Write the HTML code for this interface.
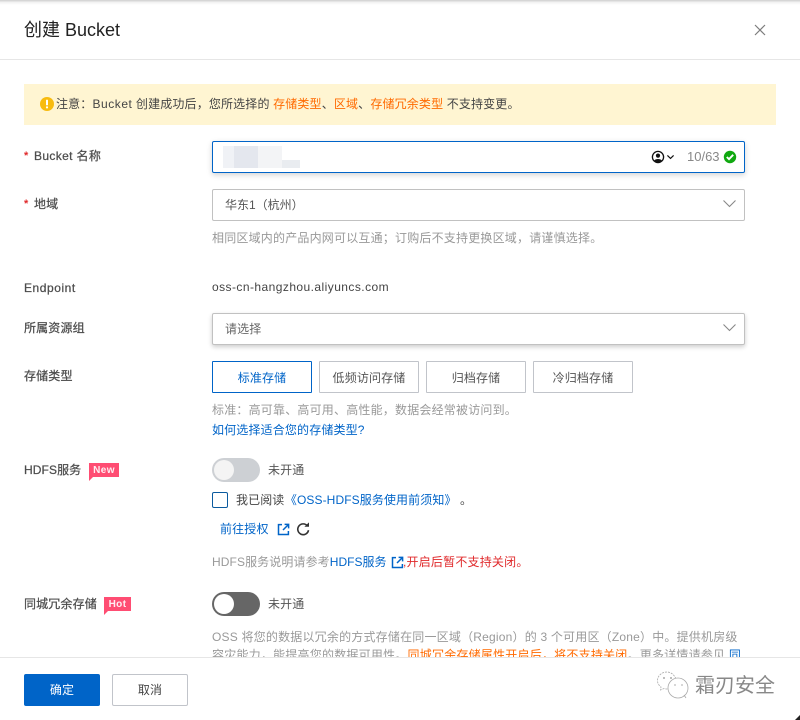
<!DOCTYPE html>
<html lang="zh-CN">
<head>
<meta charset="utf-8">
<title>创建 Bucket</title>
<style>
html,body{margin:0;padding:0;width:800px;height:720px;overflow:hidden;background:#fff}
body{position:relative;font-family:"Liberation Sans","Noto Sans CJK SC",sans-serif;font-size:12px;letter-spacing:.15px;color:#333;-webkit-font-smoothing:antialiased}
.a{position:absolute}
.t{position:absolute;white-space:nowrap;line-height:18px;height:18px}
.l{color:#4d4d4d;-webkit-text-stroke:.25px #4d4d4d}
.g{color:#999;letter-spacing:.2px}
.b{color:#0064c8}
.o{color:#ff6a00}
.r{color:#e0292b}
.s{color:#e0292b;font-weight:700}
.box{position:absolute;box-sizing:border-box;background:#fff;border:1px solid #c1c1c1;border-radius:2px}
.btn{position:absolute;box-sizing:border-box;top:361px;width:100px;height:32px;line-height:31px;text-align:center;border:1px solid #c1c4ca;border-radius:1px;color:#555;background:#fff;padding-top:1px}
.tag{position:absolute;box-sizing:border-box;padding-top:2px;color:#ffeef2;background:#ff4d73;font-size:10px;font-weight:700;letter-spacing:.4px;line-height:12px;height:14px;text-align:center}
</style>
</head>
<body>
<div class="a" style="left:0;top:0;width:800px;height:5px;background:linear-gradient(#cfcfcf,#f4f4f4 50%,#fff)"></div>

<div class="t" style="left:24px;top:18px;font-size:18px;letter-spacing:0;line-height:24px;height:24px;color:#222">创建 Bucket</div>
<svg class="a" style="left:753px;top:23px" width="14" height="14" viewBox="0 0 14 14"><path d="M2 2 L12 12 M12 2 L2 12" stroke="#7d7d7d" stroke-width="1.2" fill="none"/></svg>
<div class="a" style="left:0;top:59px;width:800px;height:1px;background:#e6e6e6"></div>

<div class="a" style="left:24px;top:84px;width:752px;height:41px;background:#fff5d2"></div>
<svg class="a" style="left:40px;top:97px" width="14" height="14" viewBox="0 0 14 14"><circle cx="7" cy="7" r="7" fill="#f8bb0f"/><rect x="6" y="2.6" width="2" height="5.8" rx=".8" fill="#fff"/><circle cx="7" cy="10.4" r="1.1" fill="#fff"/></svg>
<div class="t" style="left:56px;top:95px;letter-spacing:.15px;color:#444">注意：<span style="letter-spacing:.55px">Bucket</span> 创建成功后，您所选择的 <span class="o">存储类型</span>、<span class="o">区域</span>、<span class="o">存储冗余类型</span> 不支持变更。</div>

<div class="t s" style="left:24px;top:147px;font-size:11px">*</div>
<div class="t l" style="left:34px;top:147px;letter-spacing:.35px">Bucket 名称</div>
<div class="box" style="left:212px;top:141px;width:533px;height:32px;border-color:#0064c8;box-shadow:0 2px 6px rgba(0,0,0,.18)"></div>
<div class="a" style="left:223px;top:146px;width:11px;height:22px;background:#f0f2f6"></div>
<div class="a" style="left:234px;top:146px;width:24px;height:22px;background:#e4e7ee"></div>
<div class="a" style="left:258px;top:146px;width:24px;height:22px;background:#f3f4f6"></div>
<div class="a" style="left:282px;top:160px;width:18px;height:8px;background:#e9ecf0"></div>
<svg class="a" style="left:651px;top:150px" width="25" height="14" viewBox="0 0 25 14"><circle cx="7" cy="7" r="5.6" fill="none" stroke="#111" stroke-width="1.3"/><circle cx="7" cy="5.6" r="2.1" fill="#111"/><path d="M3.2 10.6 C4.4 8.4 9.6 8.4 10.8 10.6 C9 12.6 5 12.6 3.2 10.6Z" fill="#111"/><path d="M16.4 5.4 L19.5 8.4 L22.6 5.4" fill="none" stroke="#111" stroke-width="1.2"/></svg>
<div class="t" style="left:687px;top:148px;color:#888;font-size:13px;letter-spacing:0">10/63</div>
<svg class="a" style="left:723px;top:150px" width="14" height="14" viewBox="0 0 14 14"><circle cx="7" cy="7" r="6.2" fill="#10a810"/><path d="M3.8 7 L6 9.2 L10.2 4.8" fill="none" stroke="#fff" stroke-width="1.9"/></svg>

<div class="t s" style="left:24px;top:195px;font-size:11px">*</div>
<div class="t l" style="left:34px;top:195px">地域</div>
<div class="box" style="left:212px;top:189px;width:533px;height:32px"></div>
<div class="t" style="left:225px;top:196px;color:#555;letter-spacing:0">华东1（杭州）</div>
<svg class="a" style="left:722px;top:198px" width="15" height="12" viewBox="0 0 15 12"><path d="M1.5 2.5 L7.5 8.5 L13.5 2.5" fill="none" stroke="#888" stroke-width="1.1"/></svg>
<div class="t g" style="left:212px;top:229px">相同区域内的产品内网可以互通；订购后不支持更换区域，请谨慎选择。</div>

<div class="t l" style="left:24px;top:279px;letter-spacing:.55px">Endpoint</div>
<div class="t" style="left:212px;top:278px;color:#444;letter-spacing:.44px">oss-cn-hangzhou.aliyuncs.com</div>

<div class="t l" style="left:24px;top:319px">所属资源组</div>
<div class="box" style="left:212px;top:313px;width:533px;height:32px;box-shadow:0 2px 5px rgba(0,0,0,.2)"></div>
<div class="t" style="left:225px;top:320px;color:#666">请选择</div>
<svg class="a" style="left:722px;top:322px" width="15" height="12" viewBox="0 0 15 12"><path d="M1.5 2.5 L7.5 8.5 L13.5 2.5" fill="none" stroke="#888" stroke-width="1.1"/></svg>

<div class="t l" style="left:24px;top:367px">存储类型</div>
<div class="btn" style="left:212px;border-color:#0064c8;color:#0064c8">标准存储</div>
<div class="btn" style="left:319px">低频访问存储</div>
<div class="btn" style="left:426px">归档存储</div>
<div class="btn" style="left:533px">冷归档存储</div>
<div class="t g" style="left:212px;top:401px">标准：高可靠、高可用、高性能，数据会经常被访问到。</div>
<div class="t b" style="left:212px;top:421px">如何选择适合您的存储类型?</div>

<div class="t l" style="left:24px;top:461px;letter-spacing:.1px">HDFS服务</div>
<div class="tag" style="left:89px;top:463px;width:30px">New</div>
<div class="a" style="left:89px;top:477px;width:0;height:0;border-top:4px solid #ff4d73;border-right:4px solid transparent"></div>
<div class="a" style="left:212px;top:458px;width:48px;height:24px;border-radius:12px;background:#cdd0d4"></div>
<div class="a" style="left:214px;top:460px;width:20px;height:20px;border-radius:50%;background:#f4f4f4"></div>
<div class="t" style="left:268px;top:461px;color:#555">未开通</div>

<div class="a" style="box-sizing:border-box;left:212px;top:492px;width:16px;height:16px;border:1px solid #0b5a9e;border-radius:2px;background:#fff"></div>
<div class="t" style="left:236px;top:491px;color:#444;letter-spacing:.1px">我已阅读 <span class="b" style="margin-left:-3px">《OSS-HDFS服务使用前须知》</span> 。</div>

<div class="t b" style="left:220px;top:520px">前往授权</div>
<svg class="a" style="left:277px;top:523px" width="13" height="13" viewBox="0 0 13 13"><path d="M5 1.6 H1.5 V11.5 H11.4 V8" fill="none" stroke="#0064c8" stroke-width="1.5"/><path d="M6 7 L11 2 M7.6 1.4 H11.6 V5.4" fill="none" stroke="#0064c8" stroke-width="1.5"/></svg>
<svg class="a" style="left:296px;top:522px" width="15" height="15" viewBox="0 0 15 15"><path d="M11.4 3.9 A5.4 5.4 0 1 0 12.5 8.2" fill="none" stroke="#333" stroke-width="1.6"/><path d="M8.4 4.8 H13 V.4Z" fill="#333"/></svg>

<div class="t g" style="left:212px;top:553px;letter-spacing:.1px">HDFS服务说明请参考<span class="b" style="letter-spacing:0">HDFS服务</span></div>
<svg class="a" style="left:391px;top:556px" width="13" height="13" viewBox="0 0 13 13"><path d="M5 1.6 H1.5 V11.5 H11.4 V8" fill="none" stroke="#0064c8" stroke-width="1.5"/><path d="M6 7 L11 2 M7.6 1.4 H11.6 V5.4" fill="none" stroke="#0064c8" stroke-width="1.5"/></svg>
<div class="t r" style="left:403px;top:553px;letter-spacing:.2px">,开启后暂不支持关闭。</div>

<div class="t l" style="left:24px;top:595px">同城冗余存储</div>
<div class="tag" style="left:104px;top:597px;width:27px">Hot</div>
<div class="a" style="left:104px;top:611px;width:0;height:0;border-top:4px solid #ff4d73;border-right:4px solid transparent"></div>
<div class="a" style="left:212px;top:592px;width:48px;height:24px;border-radius:12px;background:#666"></div>
<div class="a" style="left:214px;top:594px;width:20px;height:20px;border-radius:50%;background:#fff"></div>
<div class="t" style="left:268px;top:595px;color:#555">未开通</div>

<div class="a" style="left:0;top:620px;width:800px;height:37px;overflow:hidden">
<div class="t g" style="left:212px;top:8px;letter-spacing:.2px">OSS 将您的数据以冗余的方式存储在同一区域（Region）的 3 个可用区（Zone）中。提供机房级</div>
<div class="t g" style="left:212px;top:26px;letter-spacing:.22px">容灾能力，能提高您的数据可用性。<span class="o">同城冗余存储属性开启后，将不支持关闭</span>。更多详情请参见 <span class="b">同</span></div>
</div>
<div class="a" style="left:0;top:657px;width:800px;height:1px;background:#e6e6e6"></div>

<div class="a" style="left:24px;top:674px;width:76px;height:32px;line-height:32px;text-align:center;background:#0064c8;color:#fff;border-radius:2px">确定</div>
<div class="a" style="box-sizing:border-box;left:112px;top:674px;width:76px;height:32px;line-height:30px;text-align:center;background:#fff;color:#444;border:1px solid #c1c4ca;border-radius:2px">取消</div>

<svg class="a" style="left:656px;top:670px" width="34" height="30" viewBox="0 0 34 30"><path d="M20 9 C18 4 14 2 11 2 C5.5 2 1.5 6 1.5 10.5 C1.5 13.5 3 15.5 5 17 L4.5 20 L8 18.5 C9.5 19 11 19 12 19" fill="none" stroke="#aaa" stroke-width=".8" stroke-dasharray="2 1"/><circle cx="22" cy="18" r="10" fill="#fff" stroke="#aaa" stroke-width=".8"/><path d="M28 25 L30 28" stroke="#aaa" stroke-width=".8"/><circle cx="8" cy="8" r="1" fill="#aaa"/><circle cx="15" cy="8" r="1" fill="#aaa"/><circle cx="19" cy="15" r=".9" fill="#bbb"/><circle cx="26" cy="15" r=".9" fill="#bbb"/></svg>
<div class="t" style="left:695px;top:672px;font-size:20px;letter-spacing:0;line-height:28px;height:28px;color:#888">霜刃安全</div>

<div class="a" style="left:795px;top:715px;width:5px;height:5px;background:#222;clip-path:polygon(100% 0,100% 100%,0 100%)"></div>
</body>
</html>
